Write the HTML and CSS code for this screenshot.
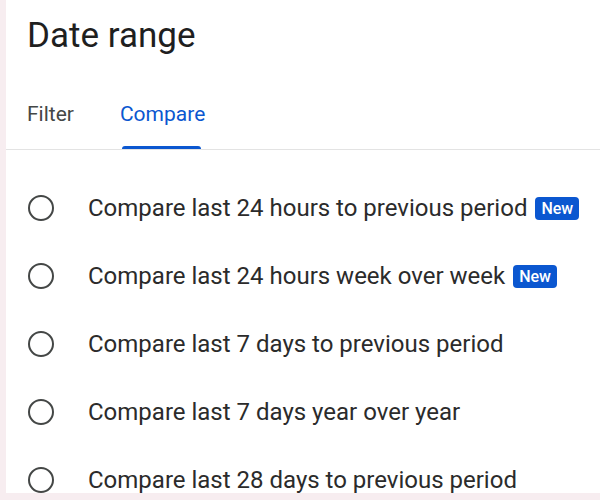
FILE: index.html
```html
<!DOCTYPE html>
<html lang="en">
<head>
  <meta charset="UTF-8">
  <title>Date range</title>
  <link rel="stylesheet" href="styles.css">
</head>
<body>

<div class="panel">
  <h2 class="title">Date range</h2>

  <div class="tabs">
    <div class="tab">Filter</div>
    <div class="tab active">Compare</div>
  </div>

  <ul class="options">
    <li class="option"><span class="radio"></span><span class="label">Compare last 24 hours to previous period</span><span class="badge">New</span></li>
    <li class="option"><span class="radio"></span><span class="label">Compare last 24 hours week over week</span><span class="badge">New</span></li>
    <li class="option"><span class="radio"></span><span class="label">Compare last 7 days to previous period</span></li>
    <li class="option"><span class="radio"></span><span class="label">Compare last 7 days year over year</span></li>
    <li class="option"><span class="radio"></span><span class="label">Compare last 28 days to previous period</span></li>
  </ul>
</div>

</body>
</html>
```

FILE: styles.css
```css
html, body {
  height: 100%;
}
body {
  font-family: 'Roboto', sans-serif;
  background: #f7edf0;
  margin: 0;
  padding: 0 0 7px 6px;
  box-sizing: border-box;
  overflow: hidden;
}
.panel {
  background: #fff;
  height: 100%;
  overflow: hidden;
}
.title {
  margin: 0;
  padding: 16px 0 0 21px;
  font-size: 35px;
  font-weight: 400;
  line-height: 40px;
  color: #1f1f1f;
}
.tabs {
  display: flex;
  margin-top: 42px;
  padding-left: 21px;
  border-bottom: 1px solid #e3e3e3;
}
.tab {
  font-size: 21px;
  color: #444746;
  padding: 4px 0 23px;
  margin-right: 46px;
  position: relative;
}
.tab.active {
  color: #0b57d0;
}
.tab.active::after {
  content: "";
  position: absolute;
  left: 2px;
  right: 4px;
  bottom: 0;
  height: 3px;
  background: #0b57d0;
  border-radius: 3px 3px 0 0;
}
.options {
  list-style: none;
  margin: 0;
  padding: 32px 0 0 22px;
}
.option {
  display: flex;
  align-items: center;
  height: 52px;
  margin-bottom: 16px;
}
.radio {
  width: 22px;
  height: 22px;
  border: 2.5px solid #444746;
  border-radius: 50%;
  flex-shrink: 0;
}
.label {
  margin-left: 34px;
  font-size: 24px;
  color: #2b2b2b;
}
.badge {
  margin-left: 8px;
  background: #0b57d0;
  color: #fff;
  font-size: 16px;
  font-weight: 500;
  padding: 2px 6px 2px;
  border-radius: 4px;
  line-height: 19px;
}
```
